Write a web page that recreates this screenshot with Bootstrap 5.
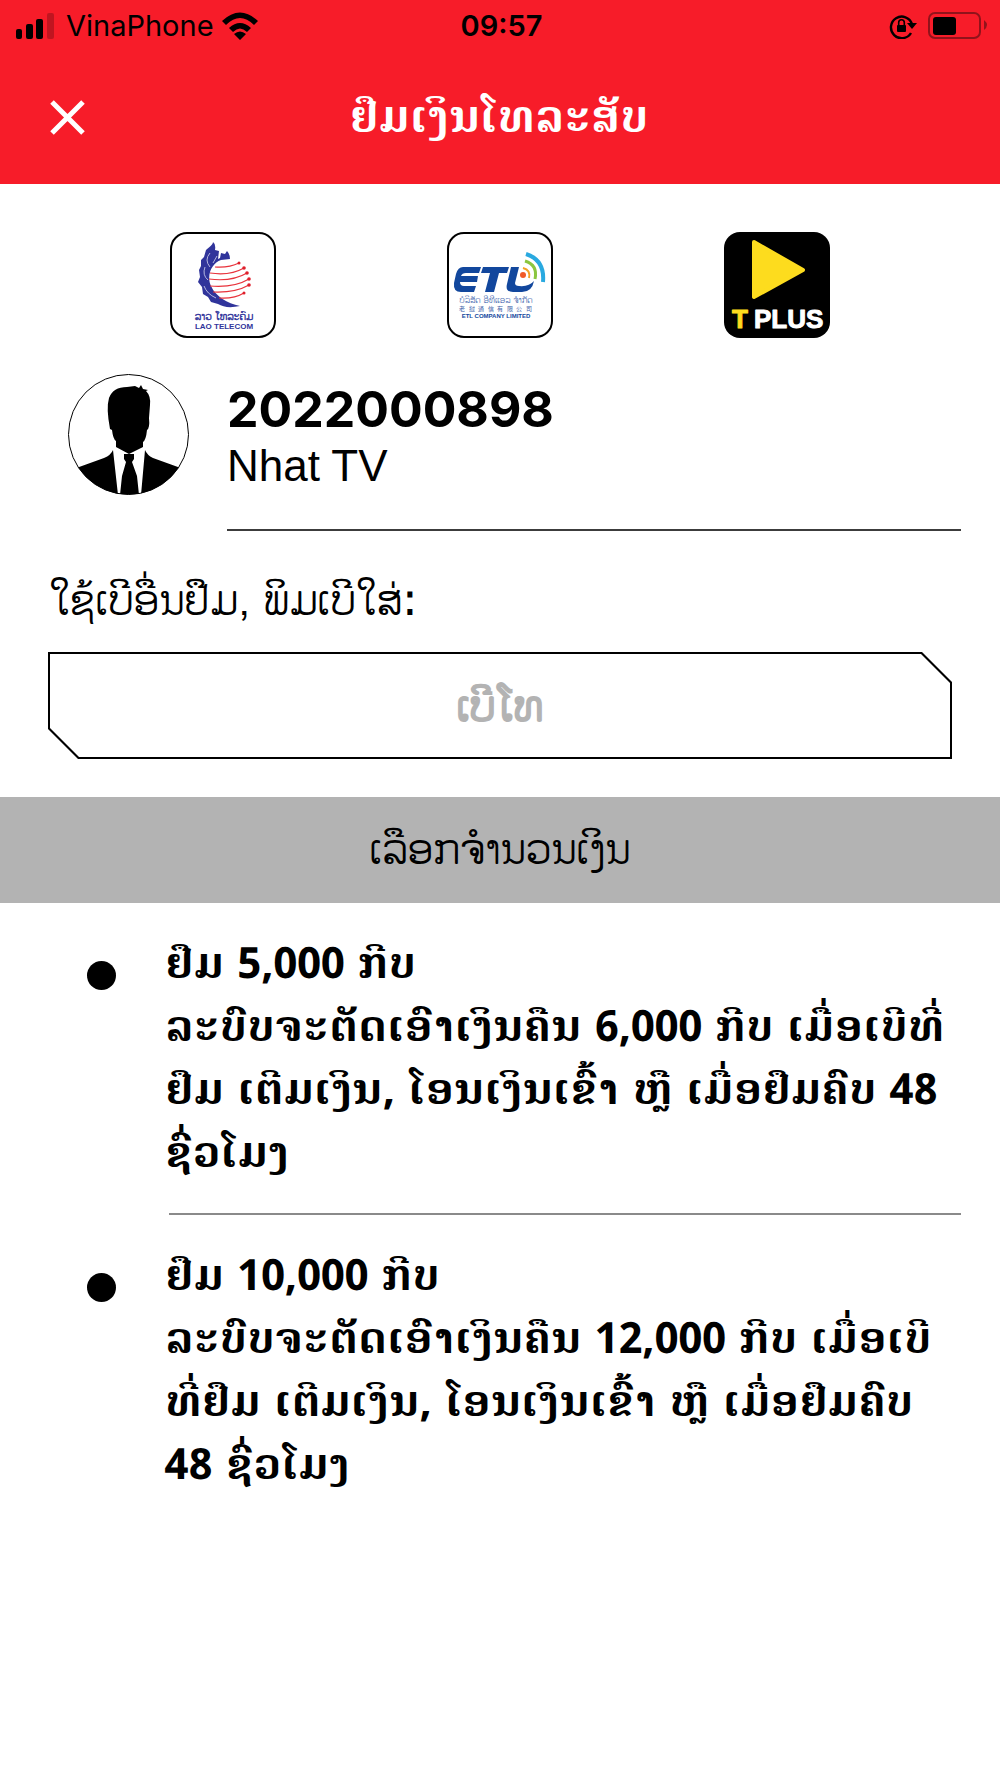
<!DOCTYPE html>
<html lang="lo">
<head>
<meta charset="utf-8">
<meta name="viewport" content="width=device-width, initial-scale=1">
<title>ຢືມເງິນໂທລະສັບ</title>
<link href="https://cdn.jsdelivr.net/npm/bootstrap@5.3.0/dist/css/bootstrap.min.css" rel="stylesheet">
<style>
body{font-family:Phetsarath,"Phetsarath OT","Noto Sans Lao Looped","Noto Sans Lao","Noto Sans",sans-serif;color:#000;background:#fff}
.app-head{background:#f71c29;padding-bottom:31px}
.status-bar{font-family:Inter,"Liberation Sans",sans-serif;font-size:29px;line-height:52px;height:52px;padding:0 13px 0 16px}
.status-side{flex:1 1 0}
.title-bar{height:101px;padding:30px 50px 0}
.close-btn{width:36px;height:40px;line-height:0}
.page-title{font-size:44px;line-height:72px;font-weight:700;padding-right:38px}
.brands{padding:48px 85px 0}
.brand-btn{width:106px;height:106px;line-height:0}
.profile{padding:36px 39px 34px 68px}
.avatar{width:121px;height:121px;margin-right:38px}
.phone-no{font-family:Inter,"Liberation Sans",sans-serif;font-size:50px;line-height:60px;font-weight:700}
.owner{font-family:"Liberation Sans",sans-serif;font-size:44px;line-height:54px}
.profile-text{padding-top:5px;height:157px;border-bottom:2px solid #3c3c3c}
.form-area{padding:0 48px 38px}
.field-label{font-size:43px;line-height:74px;padding:0 1px 13px}
.cut-frame{background:#000;padding:2px;clip-path:polygon(0 0,calc(100% - 30px) 0,100% 30px,100% 100%,30px 100%,0 calc(100% - 30px))}
.cut-input{height:103px;font-size:43px;border:0;border-radius:0;background:#fff;clip-path:polygon(0 0,calc(100% - 29px) 0,100% 29px,100% 100%,29px 100%,0 calc(100% - 29px))}
.cut-input::placeholder{color:#b3b3b3;opacity:1;-webkit-text-stroke:2px #b3b3b3}
.band{background:#b3b3b3;height:106px;font-size:43px;font-weight:400;line-height:108px}
.plan{padding:30px 39px 0 87px}
.plan-dot{appearance:none;width:29px;height:29px;border-radius:50%;background:#000;margin:28px 49px 0 0}
.plan-text{font-size:43px;line-height:63px;font-weight:700}
.plan-body{padding-bottom:28px}
.plan-line{border-bottom:2px solid #8a8a8a;margin-left:4px}
</style>
</head>
<body>
<header class="app-head">
  <div class="status-bar d-flex align-items-center">
    <div class="status-side d-flex align-items-center">
      <svg width="38" height="26" viewBox="0 0 38 26"><rect x="0" y="16" width="6" height="10" rx="2"/><rect x="10" y="11" width="7" height="15" rx="2"/><rect x="20" y="6" width="7" height="20" rx="2"/><rect x="31" y="0" width="7" height="26" rx="2" opacity=".22"/></svg>
      <span class="ms-2 ps-1 me-2">VinaPhone</span>
      <svg width="36" height="28" viewBox="0 0 36 28"><path d="M0 9Q18-8 36 9L32 13Q18-1 4 13ZM7 16Q18 6 29 16L25 20Q18 13 11 20ZM12 22Q18 17 24 22L18 28Z"/></svg>
    </div>
    <time class="fw-semibold">09:57</time>
    <div class="status-side d-flex align-items-center justify-content-end">
      <svg class="me-2" width="30" height="26" viewBox="0 0 30 26"><path d="M22 20A10.800 10.800 0 1 1 23 11" fill="none" stroke="#000" stroke-width="2.400"/><path d="M18 10H28L23 16Z"/><rect x="8" y="12" width="9" height="7" rx="1"/><path d="M9.700 13V9.500a2.800 2.800 0 0 1 5.600 0V13" fill="none" stroke="#000" stroke-width="1.600"/></svg>
      <svg width="60" height="28" viewBox="0 0 60 28"><rect x="2" y="1" width="51" height="25" rx="6" fill="none" stroke="#91131b" stroke-width="2"/><rect x="6" y="5" width="23" height="18" rx="3"/><path d="M57 8Q63 13 57 18Z" fill="#91131b"/></svg>
    </div>
  </div>
  <div class="title-bar d-flex align-items-center">
    <button type="button" class="close-btn btn p-0 border-0" aria-label="ປິດ"><svg width="36" height="40" viewBox="0 0 36 40"><path d="M2 4L33 35M33 4L2 35" stroke="#fff" stroke-width="5"/></svg></button>
    <h1 class="page-title flex-grow-1 text-center text-white m-0">ຢືມເງິນໂທລະສັບ</h1>
  </div>
</header>
<main>
  <nav class="brands" aria-label="ເຄືອຂ່າຍ">
    <div class="row g-0 text-center">
      <div class="col-4"><button type="button" class="brand-btn btn p-0 border-0" aria-label="Lao Telecom">
        <svg width="106" height="106" viewBox="0 0 106 106"><rect x="1" y="1" width="104" height="104" rx="16" fill="#fff" stroke="#000" stroke-width="2"/>
        <path d="M43 10C43 13 39 15 36 18L34 25L31 28L31 34L29 38L30 45L28 50L32 55L33 62L38 65L41 70L48 72Q56 77 70 74C57 71 46 65 41 54C36 43 42 31 51 28L60 27Q60 22 57 19L55 22L51 21L50 26L48 27L49 19L45 18Q46 12 43 10Z" fill="#30349b"/>
        <path d="M40 21Q34 28 40 35M35 35Q32 43 38 48M34 54Q37 62 46 66M47 24L43 31" fill="none" stroke="#b6b8e0" stroke-width="1"/>
        <g fill="none" stroke="#e8323b" stroke-width="1.200"><path d="M45 35Q59 36 69 31"/><path d="M40 41Q60 44 74 36"/><path d="M39 47Q62 50 77 41"/><path d="M40 54Q64 56 79 47"/><path d="M43 60Q65 61 79 53"/><path d="M49 66Q64 67 74 61"/></g>
        <g fill="#df1f2b"><circle cx="69" cy="31" r="1.500"/><circle cx="74" cy="36" r="1.800"/><circle cx="77" cy="41" r="1.800"/><circle cx="79" cy="47" r="1.800"/><circle cx="79" cy="53" r="1.800"/><circle cx="74" cy="61" r="1.500"/></g>
        <text x="54" y="88" text-anchor="middle" font-size="11" fill="#30349b" stroke="#30349b" stroke-width=".4">ລາວ ໂທລະຄົມ</text>
        <text x="54" y="97" text-anchor="middle" font-family="Liberation Sans,sans-serif" font-size="8" font-weight="700" fill="#30349b">LAO TELECOM</text></svg>
      </button></div>
      <div class="col-4"><button type="button" class="brand-btn btn p-0 border-0" aria-label="ETL">
        <svg width="106" height="106" viewBox="0 0 106 106"><rect x="1" y="1" width="104" height="104" rx="16" fill="#fff" stroke="#000" stroke-width="2"/>
        <g fill="#12479d"><path d="M16 35H34L32 41H19Q15 41 14 44H31L30 50H13Q13 54 17 54H29L27 60H14Q6 60 7 51L9 42Q11 35 16 35Z"/><path d="M36 35H62L60 41H52L47 60H38L43 41H34Z"/><path d="M64 35H72L68 51Q68 54 72 54Q82 55 87 49Q85 60 75 60H66Q58 60 60 52Z"/></g>
        <circle cx="76" cy="43" r="3" fill="#f05a28"/><g fill="none"><path d="M76 36Q84 38 82 46" stroke="#f3a125" stroke-width="2"/><path d="M78 29Q91 33 88 47" stroke="#8bc63f" stroke-width="3"/><path d="M79 22Q98 28 96 50" stroke="#29a9e0" stroke-width="4"/></g>
        <text x="49" y="71" text-anchor="middle" font-size="9" fill="#5272b4">ບໍລິສັດ ອີທີແອລ ຈຳກັດ</text>
        <text y="79" text-anchor="middle" font-family="Noto Sans CJK SC,sans-serif" font-size="6" fill="#3a5da8"><tspan x="15">老</tspan><tspan x="25">挝</tspan><tspan x="34">通</tspan><tspan x="44">信</tspan><tspan x="53">有</tspan><tspan x="63">限</tspan><tspan x="72">公</tspan><tspan x="82">司</tspan></text>
        <text x="49" y="86" text-anchor="middle" font-family="Liberation Sans,sans-serif" font-size="6" font-weight="700" fill="#12479d">ETL COMPANY LIMITED</text></svg>
      </button></div>
      <div class="col-4"><button type="button" class="brand-btn btn p-0 border-0" aria-label="T Plus">
        <svg width="106" height="106" viewBox="0 0 106 106"><rect width="106" height="106" rx="16"/><path d="M30 10L79 38L30 65Z" fill="#fddc1e" stroke="#fddc1e" stroke-width="4" stroke-linejoin="round"/>
        <g font-family="Liberation Sans,sans-serif" font-size="26" font-weight="700" stroke-width="1" stroke-linejoin="round"><text x="8" y="96" fill="#fddc1e" stroke="#fddc1e">T</text><text x="30" y="96" fill="#fff" stroke="#fff">PLUS</text></g></svg>
      </button></div>
    </div>
  </nav>
  <section class="profile d-flex">
    <svg class="avatar flex-shrink-0" viewBox="0 0 121 121"><defs><clipPath id="round"><circle cx="60.500" cy="60.500" r="60"/></clipPath></defs><circle cx="60.500" cy="60.500" r="60" fill="#fff"/>
      <g clip-path="url(#round)"><path d="M0 97L36 84Q43 81 45 76L50 121H0ZM121 97L85 84Q79 81 77 76L73 121H121Z"/><path d="M42 55Q38 34 41 24Q45 13 59 13L67 12L71 14L73 11L75 15L80 16L78 17Q83 22 82 31L81 44Q82 54 79 56Q78 66 75 68V73L61 80L48 73V67Q45 65 44 56Z"/><path d="M56 80H66V85L64 88L69 102L71 121H52L54 102L58 88L56 85Z"/></g>
      <circle cx="60.500" cy="60.500" r="60" fill="none" stroke="#000"/></svg>
    <div class="profile-text flex-grow-1"><div class="phone-no">2022000898</div><div class="owner">Nhat TV</div></div>
  </section>
  <form>
    <div class="form-area">
      <label class="field-label d-block" for="loan-number">ໃຊ້ເບີອື່ນຢືມ, ພິມເບີໃສ່:</label>
      <div class="cut-frame"><input class="cut-input form-control text-center px-0 pt-1 pb-0" id="loan-number" type="tel" placeholder="ເບີໂທ"></div>
    </div>
    <h2 class="band text-center m-0">ເລືອກຈຳນວນເງິນ</h2>
    <div class="plan d-flex">
      <input class="plan-dot flex-shrink-0" type="radio" name="plan" id="plan-5000">
      <div class="flex-grow-1"><label class="plan-text plan-body d-block" for="plan-5000">ຢືມ 5,000 ກີບ<br>ລະບົບຈະຕັດເອົາເງິນຄືນ 6,000 ກີບ ເມື່ອເບີທີ່<br>ຢືມ ເຕີມເງິນ, ໂອນເງິນເຂົ້າ ຫຼື ເມື່ອຢືມຄົບ 48<br>ຊົ່ວໂມງ</label><div class="plan-line"></div></div>
    </div>
    <div class="plan d-flex">
      <input class="plan-dot flex-shrink-0" type="radio" name="plan" id="plan-10000">
      <label class="plan-text flex-grow-1" for="plan-10000">ຢືມ 10,000 ກີບ<br>ລະບົບຈະຕັດເອົາເງິນຄືນ 12,000 ກີບ ເມື່ອເບີ<br>ທີ່ຢືມ ເຕີມເງິນ, ໂອນເງິນເຂົ້າ ຫຼື ເມື່ອຢືມຄົບ<br>48 ຊົ່ວໂມງ</label>
    </div>
  </form>
</main>
<script src="https://cdn.jsdelivr.net/npm/bootstrap@5.3.0/dist/js/bootstrap.bundle.min.js"></script>
</body>
</html>
